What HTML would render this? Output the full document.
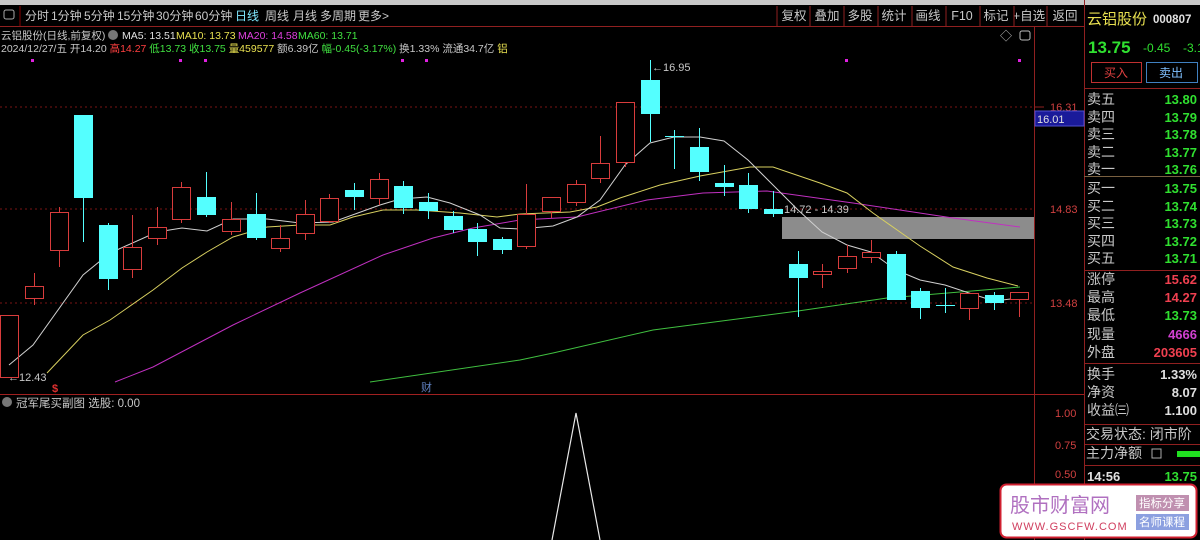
<!DOCTYPE html>
<html><head><meta charset="utf-8"><style>
html,body{margin:0;padding:0;background:#000;width:1200px;height:540px;overflow:hidden}
svg{display:block}
text{font-family:"Liberation Sans","Noto Sans CJK SC",sans-serif}
</style></head><body>
<svg width="1200" height="540" viewBox="0 0 1200 540" xmlns="http://www.w3.org/2000/svg">
<rect width="1200" height="540" fill="#000"/>
<rect x="0" y="0" width="1200" height="5" fill="#c8c8c8"/>
<!-- toolbar -->
<g font-size="12" fill="#c8c8c8">
<rect x="4" y="10" width="10" height="9" fill="none" stroke="#aaa" rx="2"/>
<line x1="20" y1="6" x2="20" y2="26" stroke="#800"/>
<text x="25" y="20">分时</text><text x="51" y="20">1分钟</text><text x="84" y="20">5分钟</text>
<text x="117" y="20">15分钟</text><text x="156" y="20">30分钟</text><text x="195" y="20">60分钟</text>
<text x="235" y="20" fill="#7fe8ff">日线</text><text x="265" y="20">周线</text><text x="293" y="20">月线</text>
<text x="320" y="20">多周期</text><text x="358" y="20">更多&gt;</text>
</g>
<g font-size="12.5" fill="#c8c8c8" text-anchor="middle">
<text x="794" y="20">复权</text><text x="827" y="20">叠加</text><text x="860" y="20">多股</text>
<text x="894" y="20">统计</text><text x="928" y="20">画线</text><text x="962" y="20">F10</text>
<text x="996" y="20">标记</text><text x="1029" y="20">+自选</text><text x="1065" y="20">返回</text>
</g>
<g stroke="#902020"><line x1="777" y1="6" x2="777" y2="26"/><line x1="810" y1="6" x2="810" y2="26"/><line x1="844" y1="6" x2="844" y2="26"/><line x1="878" y1="6" x2="878" y2="26"/><line x1="912" y1="6" x2="912" y2="26"/><line x1="946" y1="6" x2="946" y2="26"/><line x1="980" y1="6" x2="980" y2="26"/><line x1="1014" y1="6" x2="1014" y2="26"/><line x1="1047" y1="6" x2="1047" y2="26"/></g>
<line x1="0" y1="26.5" x2="1084" y2="26.5" stroke="#902020"/>
<!-- info lines -->
<g font-size="10.5">
<text x="1" y="39" fill="#c8c8c8">云铝股份(日线,前复权)</text>
<circle cx="113" cy="35" r="5" fill="#777"/>
<text x="122" y="39" fill="#e0e0e0">MA5: 13.51</text>
<text x="176" y="39" fill="#e8e050">MA10: 13.73</text>
<text x="238" y="39" fill="#e040e0">MA20: 14.58</text>
<text x="298" y="39" fill="#40e040">MA60: 13.71</text>
<text x="1" y="52" fill="#c8c8c8">2024/12/27/五 开14.20 <tspan fill="#ff4040">高14.27</tspan> <tspan fill="#40e040">低13.73 收13.75</tspan> <tspan fill="#e8e050">量459577</tspan> 额6.39亿 <tspan fill="#40e040">幅-0.45(-3.17%)</tspan> 换1.33% 流通34.7亿 <tspan fill="#e8e050">铝</tspan></text>
</g>
<text x="1000" y="40" font-size="12" fill="#bbb">◇</text>
<rect x="1020" y="31" width="10" height="9" fill="none" stroke="#bbb" rx="2"/>
<g fill="#e020e0"><rect x="31" y="59" width="3" height="3"/><rect x="179" y="59" width="3" height="3"/><rect x="204" y="59" width="3" height="3"/><rect x="401" y="59" width="3" height="3"/><rect x="425" y="59" width="3" height="3"/><rect x="845" y="59" width="3" height="3"/><rect x="1018" y="59" width="3" height="3"/></g>
<g stroke="#7a1515" stroke-dasharray="2,3"><line x1="0" y1="107" x2="1034" y2="107"/><line x1="0" y1="209" x2="1034" y2="209"/><line x1="0" y1="303" x2="1034" y2="303"/></g>
<line x1="1034.5" y1="27" x2="1034.5" y2="540" stroke="#902020"/>
<line x1="1084.5" y1="0" x2="1084.5" y2="540" stroke="#902020"/>
<line x1="0" y1="394.5" x2="1084" y2="394.5" stroke="#a02020"/>
<rect x="782" y="217" width="252" height="22" fill="#8c8c8c"/>
<g fill="none" stroke-width="1">
<polyline stroke="#40c040" points="370,382 520,360 553,353 653,330 798,311 887,298 1020,287"/>
<polyline stroke="#c030c0" points="115,382 153,367 233,325 300,293 383,255 433,238 473,228 520,220 577,217 647,200 703,193 767,191 853,203 953,218 1020,227"/>
<polyline stroke="#d8d060" points="47,373 83,335 110,320 153,290 182,268 207,252 233,237 267,227 300,225 330,225 353,217 383,210 417,210 460,213 497,217 520,214 570,212 597,207 620,198 660,185 700,176 750,167 773,167 820,183 847,193 873,213 900,232 920,246 953,267 987,278 1018,286"/>
<polyline stroke="#d0d0d0" points="9,365 33,345 83,275 110,253 157,232 182,228 207,231 233,219 267,219 300,223 333,222 380,205 400,199 427,197 450,203 480,215 500,228 520,229 553,226 577,217 600,200 625,165 650,143 674,137 700,137 724,141 748,160 773,185 798,210 822,232 847,245 871,252 896,270 920,280 945,285 969,293 994,301 1019,298"/>
</g>
<g fill="none" stroke="#d83c3c">
<rect x="0.5" y="315.5" width="18" height="62"/>
<line x1="34.5" y1="273" x2="34.5" y2="305"/><rect x="25.5" y="286.5" width="18" height="12" fill="#000"/>
<line x1="59.5" y1="207" x2="59.5" y2="267"/><rect x="50.5" y="212.5" width="18" height="38" fill="#000"/>
<line x1="132.5" y1="215" x2="132.5" y2="278"/><rect x="123.5" y="247.5" width="18" height="22" fill="#000"/>
<line x1="157.5" y1="207" x2="157.5" y2="245"/><rect x="148.5" y="227.5" width="18" height="11" fill="#000"/>
<line x1="181.5" y1="182" x2="181.5" y2="223"/><rect x="172.5" y="187.5" width="18" height="32" fill="#000"/>
<line x1="231.5" y1="202" x2="231.5" y2="235"/><rect x="222.5" y="219.5" width="18" height="12" fill="#000"/>
<line x1="280.5" y1="225" x2="280.5" y2="252"/><rect x="271.5" y="238.5" width="18" height="10" fill="#000"/>
<line x1="305.5" y1="200" x2="305.5" y2="240"/><rect x="296.5" y="214.5" width="18" height="19" fill="#000"/>
<line x1="329.5" y1="194" x2="329.5" y2="223"/><rect x="320.5" y="198.5" width="18" height="23" fill="#000"/>
<line x1="379.5" y1="173" x2="379.5" y2="205"/><rect x="370.5" y="179.5" width="18" height="19" fill="#000"/>
<line x1="526.5" y1="184" x2="526.5" y2="249"/><rect x="517.5" y="214.5" width="18" height="32" fill="#000"/>
<line x1="551.5" y1="197" x2="551.5" y2="218"/><rect x="542.5" y="197.5" width="18" height="14" fill="#000"/>
<line x1="576.5" y1="180" x2="576.5" y2="206"/><rect x="567.5" y="184.5" width="18" height="18" fill="#000"/>
<line x1="600.5" y1="136" x2="600.5" y2="183"/><rect x="591.5" y="163.5" width="18" height="15" fill="#000"/>
<line x1="625.5" y1="102" x2="625.5" y2="167"/><rect x="616.5" y="102.5" width="18" height="60" fill="#000"/>
<line x1="822.5" y1="264" x2="822.5" y2="288"/><rect x="813.5" y="271.5" width="18" height="3" fill="#000"/>
<line x1="847.5" y1="245" x2="847.5" y2="273"/><rect x="838.5" y="256.5" width="18" height="12" fill="#000"/>
<line x1="871.5" y1="240" x2="871.5" y2="263"/><rect x="862.5" y="252.5" width="18" height="5" fill="#000"/>
<line x1="969.5" y1="293" x2="969.5" y2="320"/><rect x="960.5" y="293.5" width="18" height="15" fill="#000"/>
<line x1="1019.5" y1="292" x2="1019.5" y2="317"/><rect x="1010.5" y="292.5" width="18" height="7" fill="#000"/>
</g>
<g fill="#54ffff" stroke="#54ffff">
<line x1="83.5" y1="115" x2="83.5" y2="242"/><rect x="74.5" y="115.5" width="18" height="82"/>
<line x1="108.5" y1="223" x2="108.5" y2="290"/><rect x="99.5" y="225.5" width="18" height="53"/>
<line x1="206.5" y1="172" x2="206.5" y2="217"/><rect x="197.5" y="197.5" width="18" height="17"/>
<line x1="256.5" y1="193" x2="256.5" y2="240"/><rect x="247.5" y="214.5" width="18" height="23"/>
<line x1="354.5" y1="183" x2="354.5" y2="210"/><rect x="345.5" y="190.5" width="18" height="6"/>
<line x1="403.5" y1="181" x2="403.5" y2="214"/><rect x="394.5" y="186.5" width="18" height="21"/>
<line x1="428.5" y1="193" x2="428.5" y2="219"/><rect x="419.5" y="202.5" width="18" height="8"/>
<line x1="453.5" y1="211" x2="453.5" y2="233"/><rect x="444.5" y="216.5" width="18" height="13"/>
<line x1="477.5" y1="223" x2="477.5" y2="256"/><rect x="468.5" y="229.5" width="18" height="12"/>
<line x1="502.5" y1="237" x2="502.5" y2="254"/><rect x="493.5" y="239.5" width="18" height="10"/>
<line x1="650.5" y1="60" x2="650.5" y2="142"/><rect x="641.5" y="80.5" width="18" height="33"/>
<line x1="674.5" y1="130" x2="674.5" y2="169"/><line x1="665" y1="136.5" x2="684" y2="136.5"/>
<line x1="699.5" y1="128" x2="699.5" y2="181"/><rect x="690.5" y="147.5" width="18" height="24"/>
<line x1="724.5" y1="165" x2="724.5" y2="196"/><rect x="715.5" y="183.5" width="18" height="3"/>
<line x1="748.5" y1="173" x2="748.5" y2="213"/><rect x="739.5" y="185.5" width="18" height="23"/>
<line x1="773.5" y1="191" x2="773.5" y2="217"/><rect x="764.5" y="209.5" width="18" height="4"/>
<line x1="798.5" y1="251" x2="798.5" y2="317"/><rect x="789.5" y="264.5" width="18" height="13"/>
<line x1="896.5" y1="251" x2="896.5" y2="299"/><rect x="887.5" y="254.5" width="18" height="45"/>
<line x1="920.5" y1="288" x2="920.5" y2="319"/><rect x="911.5" y="291.5" width="18" height="16"/>
<line x1="945.5" y1="288" x2="945.5" y2="313"/><line x1="936" y1="305.5" x2="955" y2="305.5"/>
<line x1="994.5" y1="292" x2="994.5" y2="310"/><rect x="985.5" y="295.5" width="18" height="7"/>
</g>
<g font-size="11" fill="#c8c8c8">
<text x="8" y="381">←12.43</text>
<text x="652" y="71">←16.95</text>
<text x="784" y="213">14.72 - 14.39</text>
</g>
<text x="52" y="392" font-size="11" fill="#e03030" font-weight="bold">$</text>
<text x="421" y="391" font-size="11" fill="#6080c0">财</text>
<g font-size="11" fill="#d04040">
<line x1="1034" y1="107" x2="1044" y2="107" stroke="#902020"/>
<text x="1050" y="111">16.31</text>
<text x="1050" y="213">14.83</text>
<text x="1050" y="307">13.48</text>
<text x="1055" y="417">1.00</text>
<text x="1055" y="449">0.75</text>
<text x="1055" y="478">0.50</text>
</g>
<rect x="1035" y="111" width="49" height="15" fill="#1a1a9a" stroke="#5050d0"/>
<text x="1037" y="123" font-size="11" fill="#e0e0e0">16.01</text>
<circle cx="7" cy="402" r="5" fill="#777"/>
<text x="16" y="407" font-size="11.5" fill="#c8c8c8">冠军尾买副图 选股: 0.00</text>
<polyline points="552,540 576,413 600,540" fill="none" stroke="#e8e8e8" stroke-width="1.2"/>
<text x="1087" y="24" font-size="15" fill="#e8e050">云铝股份</text>
<text x="1153" y="23" font-size="11.5" font-weight="bold" fill="#e0e0e0">000807</text>
<text x="1088" y="53" font-size="17" font-weight="bold" fill="#30e030">13.75</text>
<text x="1143" y="52" font-size="12" fill="#30e030">-0.45</text>
<text x="1183" y="52" font-size="12" fill="#30e030">-3.1</text>
<rect x="1091.5" y="62.5" width="50" height="20" fill="none" stroke="#c03030"/>
<text x="1116" y="77" font-size="12" fill="#e04040" text-anchor="middle">买入</text>
<rect x="1146.5" y="62.5" width="51" height="20" fill="none" stroke="#4080c0"/>
<text x="1171" y="77" font-size="12" fill="#80c0ff" text-anchor="middle">卖出</text>
<line x1="1084" y1="88.5" x2="1200" y2="88.5" stroke="#902020"/>
<g font-size="14" fill="#c8c8c8">
<text x="1087" y="104">卖五</text><text x="1087" y="122">卖四</text><text x="1087" y="139">卖三</text><text x="1087" y="157">卖二</text><text x="1087" y="174">卖一</text>
<text x="1087" y="193">买一</text><text x="1087" y="211">买二</text><text x="1087" y="228">买三</text><text x="1087" y="246">买四</text><text x="1087" y="263">买五</text>
<text x="1087" y="284">涨停</text><text x="1087" y="302">最高</text><text x="1087" y="320">最低</text><text x="1087" y="339">现量</text><text x="1087" y="357">外盘</text>
<text x="1087" y="379">换手</text><text x="1087" y="397">净资</text><text x="1087" y="415">收益㈢</text>
<text x="1086" y="439">交易状态: 闭市阶</text><text x="1086" y="458">主力净额</text>
</g>
<g font-size="13" font-weight="bold" text-anchor="end" fill="#30e030">
<text x="1197" y="104">13.80</text><text x="1197" y="122">13.79</text><text x="1197" y="139">13.78</text><text x="1197" y="157">13.77</text><text x="1197" y="174">13.76</text>
<text x="1197" y="193">13.75</text><text x="1197" y="211">13.74</text><text x="1197" y="228">13.73</text><text x="1197" y="246">13.72</text><text x="1197" y="263">13.71</text>
<text x="1197" y="284" fill="#f04050">15.62</text><text x="1197" y="302" fill="#f04050">14.27</text><text x="1197" y="320">13.73</text>
<text x="1197" y="339" fill="#d040d0">4666</text><text x="1197" y="357" fill="#f04050">203605</text>
<text x="1197" y="379" fill="#e0e0e0">1.33%</text><text x="1197" y="397" fill="#e0e0e0">8.07</text><text x="1197" y="415" fill="#e0e0e0">1.100</text>
<text x="1197" y="481">13.75</text>
</g>
<text x="1087" y="481" font-size="13" font-weight="bold" fill="#e0e0e0">14:56</text>
<rect x="1152" y="449" width="9" height="9" fill="none" stroke="#aaa"/>
<rect x="1177" y="451" width="23" height="6" fill="#20e020"/>
<g stroke="#7a6040"><line x1="1084" y1="176.5" x2="1200" y2="176.5"/></g>
<g stroke="#902020"><line x1="1084" y1="270.5" x2="1200" y2="270.5"/><line x1="1084" y1="363.5" x2="1200" y2="363.5"/><line x1="1084" y1="424.5" x2="1200" y2="424.5"/><line x1="1084" y1="444.5" x2="1200" y2="444.5"/><line x1="1084" y1="465.5" x2="1200" y2="465.5"/></g>
<rect x="1000.5" y="484.5" width="196" height="53" rx="6" fill="#fff" stroke="#d02030" stroke-width="2"/>
<text x="1010" y="512" font-size="20" fill="#b070c0" font-family="'Noto Serif CJK SC',serif">股市财富网</text>
<text x="1012" y="530" font-size="11" fill="#d04060" font-family="'Liberation Serif',serif" letter-spacing="1">WWW.GSCFW.COM</text>
<rect x="1136" y="495" width="53" height="16" fill="#c090b0"/>
<text x="1162" y="507" font-size="11.5" fill="#fff" text-anchor="middle">指标分享</text>
<rect x="1136" y="514" width="53" height="16" fill="#8ca0e0"/>
<text x="1162" y="526" font-size="11.5" fill="#fff" text-anchor="middle">名师课程</text>
</svg>
</body></html>
